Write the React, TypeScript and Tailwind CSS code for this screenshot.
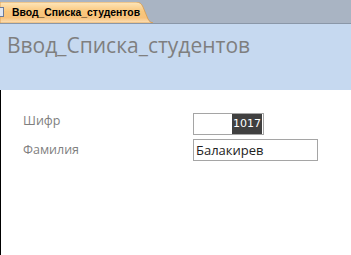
import React from "react";

export default function App() {
  const font = { fontFamily: '"Open Sans", "Noto Sans", sans-serif' };
  return (
    <div className="w-[351px] h-[255px] overflow-hidden bg-white flex flex-col" style={font}>
      <div className="h-[23px] bg-[#a9b4c3] flex items-end">
        <div className="relative h-[21px] w-[153px] flex items-start">
          <svg width="153" height="21" className="absolute inset-0">
            <defs>
              <linearGradient id="tg" x1="0" y1="0" x2="0" y2="1">
                <stop offset="0" stopColor="#fde7bd" />
                <stop offset="0.45" stopColor="#f9c77c" />
                <stop offset="0.75" stopColor="#f8c27a" />
                <stop offset="1" stopColor="#fde2bb" />
              </linearGradient>
            </defs>
            <path d="M0 0 H136 Q141 0 143 5 L148 17 Q150 21 153 21 H0 Z" fill="url(#tg)" stroke="#d99a4a" strokeWidth="0.8" />
          </svg>
          <div className="relative ml-[-2px] mt-[5px] w-[6px] h-[10px] border border-[#6b7a99] bg-[#dfe6f2]" />
          <span className="relative ml-[8px] mt-[3px] text-[10.4px] font-bold text-black leading-[16px]" style={{ fontFamily: '"Liberation Sans", Arial, sans-serif' }}>
            Ввод_Списка_студентов
          </span>
        </div>
      </div>
      <div className="h-[67px] bg-[#c6d9f0] border-t border-[#8a97a8] pl-[7px] pt-[6px]">
        <span className="text-[21px] text-[#7f7f7f] leading-[30px]">Ввод_Списка_студентов</span>
      </div>
      <div className="flex-1 border-l border-black pl-[22px] pt-[23px] flex flex-col gap-[4px]">
        <div className="flex items-start">
          <div className="w-[170px] text-[12.5px] text-[#7f7f7f] leading-[18px] mt-[-1px]">Шифр</div>
          <div className="w-[71px] h-[22px] border border-[#a5a5a5] bg-white flex justify-end items-center pr-[1px]">
            <span className="bg-[#404040] text-white text-[11px] h-[20px] leading-[20px] px-[1px]" style={{ fontFamily: '"DejaVu Sans", sans-serif' }}>1017</span>
          </div>
        </div>
        <div className="flex items-start">
          <div className="w-[170px] text-[12.5px] text-[#7f7f7f] leading-[18px] mt-[2px]">Фамилия</div>
          <div className="w-[125px] h-[22px] border border-[#a5a5a5] bg-white flex items-center pl-[2px]">
            <span className="text-[13px] text-[#222] leading-[20px]">Балакирев</span>
          </div>
        </div>
      </div>
    </div>
  );
}
